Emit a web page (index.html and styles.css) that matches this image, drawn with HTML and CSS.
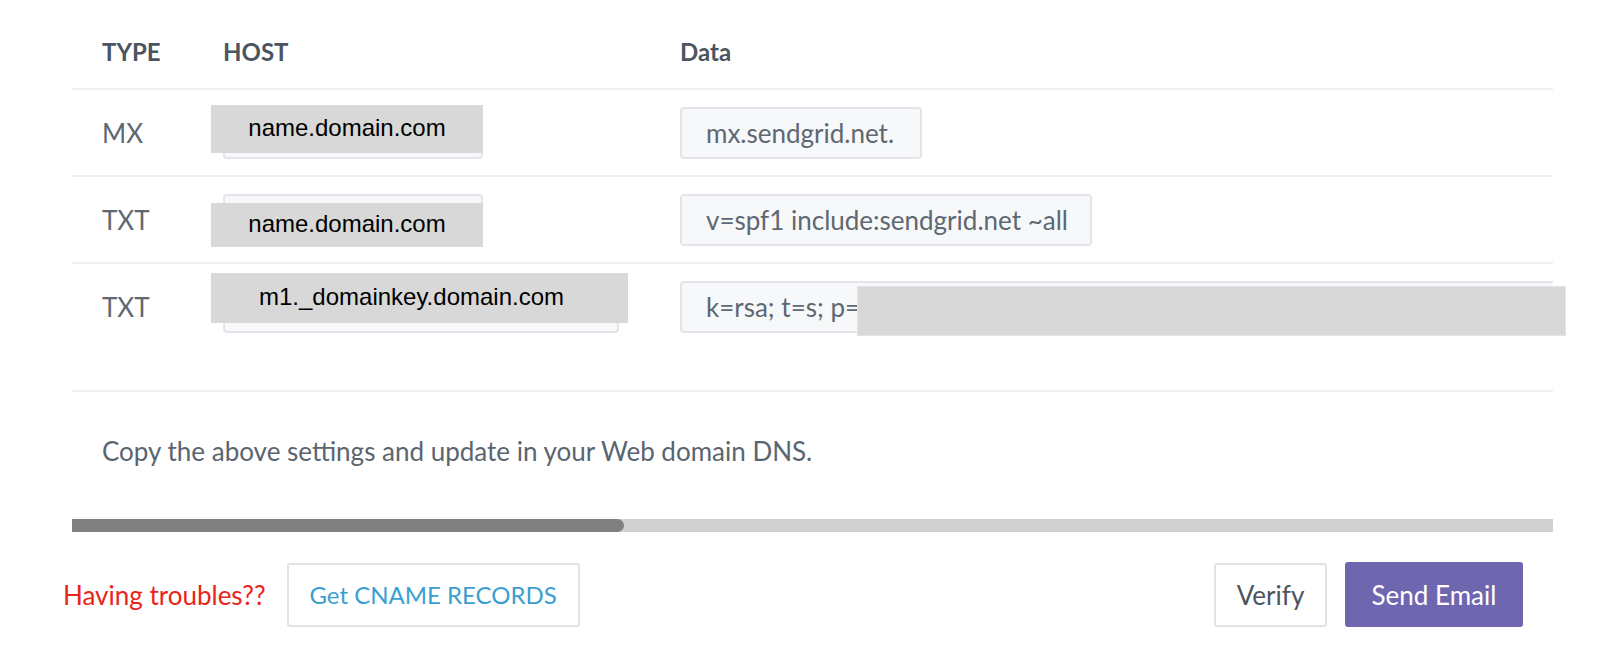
FILE: index.html
```html
<!DOCTYPE html>
<html>
<head>
<meta charset="utf-8">
<link rel="stylesheet" href="styles.css">
</head>
<body>
<div class="page">
  <div class="table">
    <div class="row head">
      <div class="cell type">TYPE</div>
      <div class="cell">HOST</div>
      <div class="cell data-h">Data</div>
    </div>
    <div class="row">
      <div class="cell type">MX</div>
      <div class="cell host">
        <div class="field w-host"></div>
        <div class="mask mask-1">name.domain.com</div>
      </div>
      <div class="cell">
        <div class="field val w-mx">mx.sendgrid.net.</div>
      </div>
    </div>
    <div class="row">
      <div class="cell type">TXT</div>
      <div class="cell host">
        <div class="field w-host"></div>
        <div class="mask mask-2">name.domain.com</div>
      </div>
      <div class="cell">
        <div class="field val w-spf">v=spf1 include:sendgrid.net ~all</div>
      </div>
    </div>
    <div class="row last">
      <div class="cell type">TXT</div>
      <div class="cell host">
        <div class="field w-dkim"></div>
        <div class="mask mask-3">m1._domainkey.domain.com</div>
      </div>
      <div class="cell key">
        <div class="field val w-key">k=rsa; t=s; p=M</div>
      </div>
    </div>
  </div>
  <div class="key-mask"></div>
  <p class="note">Copy the above settings and update in your Web domain DNS.</p>
  <div class="scroll"><div class="thumb"></div></div>
</div>
<div class="footer">
  <span class="trouble">Having troubles??</span>
  <button class="btn btn-link">Get CNAME RECORDS</button>
  <div class="spacer"></div>
  <button class="btn btn-plain">Verify</button>
  <button class="btn btn-primary">Send Email</button>
</div>
</body>
</html>
```

FILE: styles.css
```css
* { box-sizing: border-box; }
html, body { margin: 0; padding: 0; background: #fff; }
body {
  font-family: Lato, "Open Sans", sans-serif;
  color: #5d6872;
  font-size: 26px;
  width: 1600px;
  height: 648px;
  overflow: hidden;
}
.page {
  position: relative;
  margin-left: 72px;
  width: 1481px;
}
.table { overflow: hidden; }
.row {
  display: grid;
  grid-template-columns: 151px 457px 1fr;
  align-items: center;
  padding: 17px 0 16px;
  border-bottom: 2px solid #eef1f1;
}
.row.head {
  height: 90px;
  align-items: end;
  padding: 0 0 22px;
}
.row.last { padding-bottom: 57px; align-items: start; }
.cell { position: relative; min-width: 0; }
.cell.type { padding-left: 30px; line-height: 52px; }
.head .cell,
.head .cell.type {
  font-weight: 700;
  font-size: 24px;
  color: #4a5560;
  line-height: 28px;
}
.field {
  height: 52px;
  background: #f7f8fa;
  border: 2px solid #e3e5ea;
  border-radius: 4px;
  line-height: 48px;
  padding: 0 24px;
  white-space: nowrap;
  overflow: hidden;
}
.w-host { width: 260px; }
.w-dkim { width: 396px; }
.w-mx { width: 242px; }
.w-spf { width: 412px; }
.w-key { width: 900px; }
.mask {
  position: absolute;
  left: -12px;
  background: #d8d8d8;
  color: #000;
  font-family: "Liberation Sans", Arial, sans-serif;
  font-size: 24px;
  display: flex;
  align-items: center;
  justify-content: center;
  padding-bottom: 2px;
}
.mask-1 { top: -2px; width: 272px; height: 48px; }
.mask-2 { top: 9px; width: 272px; height: 44px; }
.mask-3 { top: -8px; width: 417px; height: 50px; padding-right: 16px; }
.key-mask {
  position: absolute;
  left: 785px;
  top: 286px;
  width: 709px;
  height: 50px;
  background: #d8d8d8;
  border: 1px solid #e4e4e4;
}
.note {
  margin: 0;
  padding: 44px 0 0 30px;
  line-height: 30px;
  color: #5a6570;
}
.scroll {
  margin-top: 53px;
  height: 13px;
  background: #d1d1d1;
}
.thumb {
  width: 552px;
  height: 13px;
  background: #808080;
  border-radius: 0 7px 7px 0;
}
.footer {
  display: flex;
  align-items: center;
  padding: 30px 77px 0 63px;
}
.trouble { color: #e8251a; font-size: 26px; margin-right: 21px; }
.spacer { flex: 1; }
.btn {
  font-family: Lato, "Open Sans", sans-serif;
  font-size: 26px;
  height: 64px;
  border-radius: 3px;
  border: 2px solid #dde3e6;
  background: #fff;
  padding: 0;
  cursor: pointer;
}
.btn-link { width: 293px; color: #3a9fd0; font-size: 24px; }
.btn-plain { width: 113px; color: #4a5560; margin-right: 18px; }
.btn-primary {
  width: 178px;
  color: #fff;
  background: #6f66b0;
  border-color: #6f66b0;
  height: 65px;
}
```
